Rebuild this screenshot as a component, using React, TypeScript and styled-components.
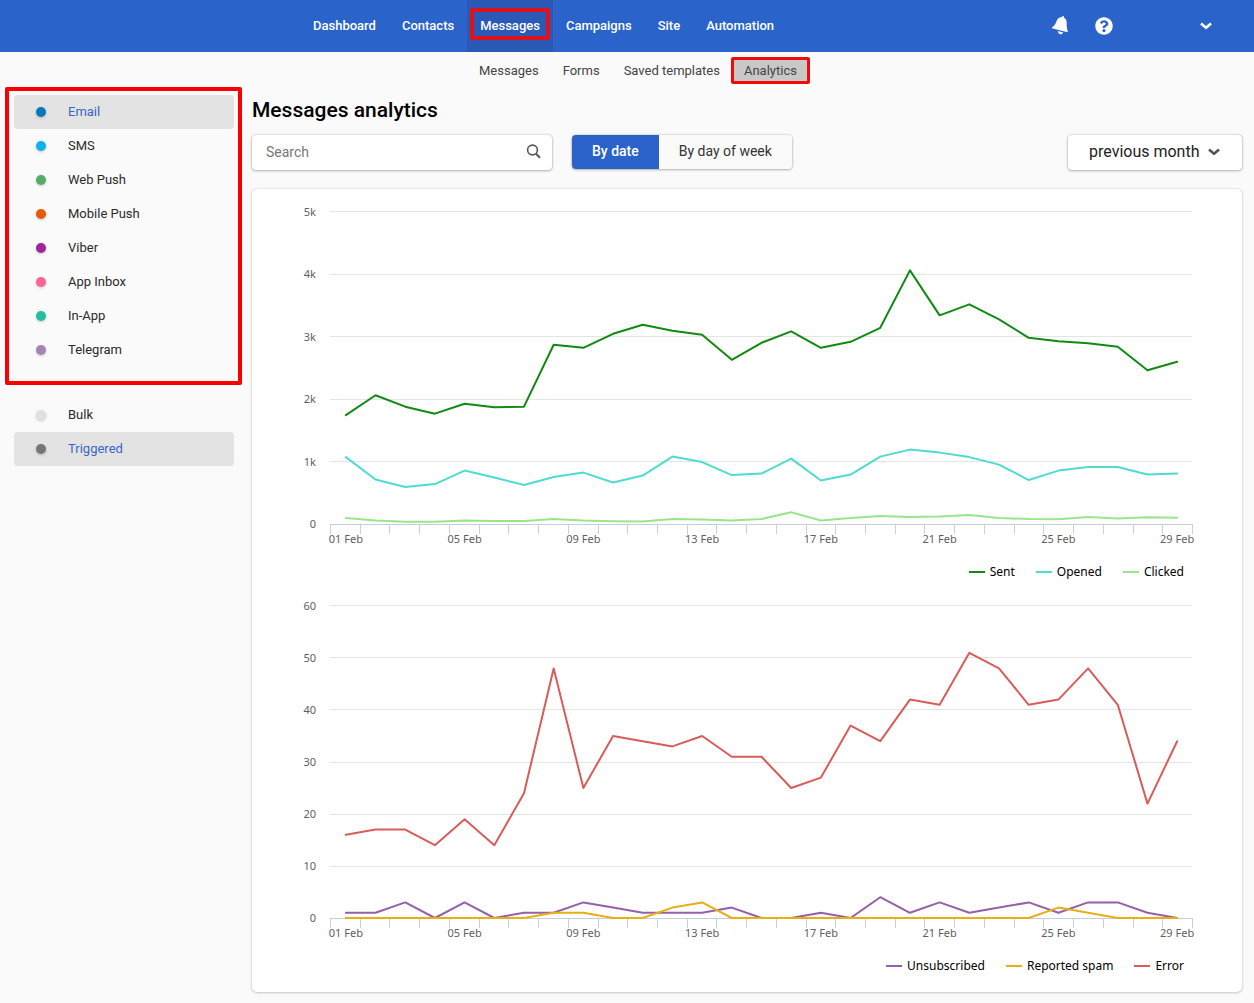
import React, { useLayoutEffect, useRef, useState } from 'react';
import styled, { createGlobalStyle, css } from 'styled-components';
import { FaQuestionCircle } from 'react-icons/fa';

const GlobalStyle = createGlobalStyle`
  *, *::before, *::after { box-sizing: border-box; }
  body {
    margin: 0;
    background: #fafafa;
    font-family: Roboto, "Liberation Sans", sans-serif;
    color: #222;
  }
  button, input, select { font: inherit; color: inherit; }
`;

/* Red frame laid over the parts of the screen that the guide points out. */
const callout = (width: number, colour: string, inset: string) => css`
  position: relative;
  &::after {
    content: '';
    position: absolute;
    inset: ${inset};
    border: ${width}px solid ${colour};
    border-radius: 2px;
    pointer-events: none;
  }
`;

const Header = styled.header`
  display: flex;
  height: 52px;
  padding-left: 300px;
  background: #2a64cb;
  color: #fff;
`;

const MainNav = styled.nav`
  display: flex;
  flex: 1;
`;

const NavLink = styled.a<{ $active?: boolean }>`
  display: flex;
  align-items: center;
  padding: 0 13px 2px;
  font-size: 13px;
  font-weight: 500;
  color: #fff;
  text-decoration: none;
  ${(p) => p.$active && css`
    background: #2a5ab6;
    ${callout(4, '#e0101c', '8px 3px 12px 3px')}
  `}
`;

const HeaderActions = styled.div`
  display: flex;
  align-items: center;
  padding-right: 42px;
`;

const IconButton = styled.button<{ $gap?: number }>`
  display: flex;
  padding: 0;
  margin-left: ${(p) => p.$gap ?? 0}px;
  border: 0;
  background: none;
  color: inherit;
  cursor: pointer;
`;

const SubNav = styled.nav`
  display: flex;
  align-items: center;
  height: 36px;
  padding-left: 467px;
`;

const SubLink = styled.a<{ $active?: boolean }>`
  padding: 2px 12px 0;
  font-size: 13px;
  line-height: 22px;
  color: #444;
  text-decoration: none;
  white-space: nowrap;
  ${(p) => p.$active && css`
    border-radius: 4px;
    background: #c8c8c8;
    ${callout(3, '#f00a0a', '-1px -1px -2px')}
  `}
`;

const Body = styled.div`
  display: flex;
  align-items: flex-start;
  padding: 0 12px 11px 5px;
`;

const Sidebar = styled.aside`
  flex: none;
  width: 237px;
  margin-right: 10px;
`;

const Group = styled.div<{ $marked?: boolean }>`
  padding: ${(p) => (p.$marked ? '7px 8px 17px 9px' : '14px 8px 0 9px')};
  ${(p) => p.$marked && callout(4, '#fa0000', '-1px 0')}
`;

const Filter = styled.button<{ $active?: boolean }>`
  display: flex;
  align-items: center;
  gap: 22px;
  width: 100%;
  height: 34px;
  padding: 0 22px;
  border: 0;
  border-radius: 4px;
  background: ${(p) => (p.$active ? '#e3e3e3' : 'transparent')};
  color: ${(p) => (p.$active ? '#3a66c4' : '#2b2b2b')};
  font-size: 13px;
  cursor: pointer;
`;

const FilterName = styled.span`
  padding-bottom: 2px;
`;

const Dot = styled.span<{ $colour: string }>`
  width: 10px;
  height: 10px;
  border-radius: 50%;
  background: ${(p) => p.$colour};
  box-shadow: 0 1px 3px rgba(0, 0, 0, 0.2);
`;

const Main = styled.main`
  flex: 1;
  min-width: 0;
`;

const Title = styled.h1`
  margin: 7px 0 9px;
  font-size: 21px;
  font-weight: 500;
  line-height: 31px;
  color: #000;
`;

const Toolbar = styled.div`
  display: flex;
  align-items: flex-start;
  height: 35px;
  margin-bottom: 19px;
`;

const raised = css`
  border-radius: 4px;
  box-shadow: 0 0 2px rgba(0, 0, 0, 0.3), 0 1px 3px rgba(0, 0, 0, 0.22);
`;

const SearchBox = styled.div`
  ${raised}
  display: flex;
  align-items: center;
  width: 300px;
  height: 35px;
  padding: 0 11px 2px 14px;
  background: #fff;
`;

const SearchInput = styled.input`
  flex: 1;
  min-width: 0;
  padding: 0;
  border: 0;
  outline: 0;
  background: none;
  font-size: 14px;
  &::placeholder { color: #777; opacity: 1; }
`;

const Toggle = styled.div`
  ${raised}
  display: flex;
  height: 34px;
  margin-left: 20px;
  overflow: hidden;
`;

const ToggleButton = styled.button<{ $active?: boolean }>`
  padding: 0 20px 2px;
  border: 0;
  background: ${(p) => (p.$active ? '#2a62c9' : '#fafafa')};
  color: ${(p) => (p.$active ? '#fff' : '#333')};
  font-size: 14px;
  font-weight: ${(p) => (p.$active ? 500 : 400)};
  cursor: pointer;
`;

const Period = styled.div`
  ${raised}
  display: grid;
  align-items: center;
  width: 174px;
  height: 35px;
  margin-left: auto;
  padding-bottom: 2px;
  background: #fff;
  & > * { grid-area: 1 / 1; }
  & > svg {
    justify-self: end;
    margin-right: 22px;
    color: #555;
    pointer-events: none;
  }
`;

const PeriodSelect = styled.select`
  appearance: none;
  width: 100%;
  height: 100%;
  padding: 0 40px 0 21px;
  border: 0;
  border-radius: 4px;
  background: none;
  font-size: 16px;
`;

const Card = styled.section`
  padding: 10px 50px 5px 48px;
  border-radius: 5px;
  background: #fff;
  box-shadow: 0 0 2px rgba(0, 0, 0, 0.2), 0 1px 3px rgba(0, 0, 0, 0.16);
`;

const Figure = styled.figure`
  margin: 0;
  height: 394px;
  font-family: "Noto Sans", "Open Sans", sans-serif;
`;

const Plot = styled.svg`
  display: block;
  width: 100%;
  height: 360px;
  overflow: visible;
`;

const AxisText = styled.text`
  font-size: 11px;
  fill: #606060;
`;

const Legend = styled.figcaption`
  display: flex;
  justify-content: flex-end;
  gap: 21px;
  padding-right: 8px;
  font-size: 12px;
  line-height: 26px;
  color: #000;
`;

const LegendItem = styled.span<{ $colour: string }>`
  display: flex;
  align-items: center;
  gap: 5px;
  &::before {
    content: '';
    width: 16px;
    height: 2px;
    background: ${(p) => p.$colour};
  }
`;

type Series = { name: string; colour: string; values: number[] };

type ChartProps = {
  id: string;
  label: string;
  ticks: { value: number; text: string }[];
  series: Series[];
  drawOrder: number[];
};

const DAYS = 29;
const LEFT = 30;
const TOP = 12;
const PLOT_HEIGHT = 313;

function Chart({ id, label, ticks, series, drawOrder }: ChartProps) {
  const ref = useRef<HTMLElement>(null);
  const [width, setWidth] = useState(892);

  useLayoutEffect(() => {
    const el = ref.current;
    if (!el) return;
    const measure = () => setWidth(el.clientWidth);
    measure();
    const observer = new ResizeObserver(measure);
    observer.observe(el);
    return () => observer.disconnect();
  }, []);

  const plotWidth = width - LEFT;
  const step = plotWidth / DAYS;
  const max = ticks[ticks.length - 1].value;
  const base = TOP + PLOT_HEIGHT;
  const x = (day: number) => LEFT + 1 + ((day + 0.5) * (plotWidth - 1)) / DAYS;
  const y = (v: number) => base - (v / max) * (PLOT_HEIGHT - 1);
  const crisp = (v: number) => Math.round(v) + 0.5;
  const gridY = (v: number) => crisp(base - (v / max) * PLOT_HEIGHT);

  return (
    <Figure ref={ref}>
      <Plot role="img" aria-label={label}>
        <clipPath id={id}>
          <rect x={LEFT} y={0} width={plotWidth} height={base + 1} />
        </clipPath>
        {ticks.map((t) => (
          <g key={t.value}>
            {t.value > 0 && (
              <line x1={LEFT} x2={width} y1={gridY(t.value)} y2={gridY(t.value)} stroke="#e4e4e4" />
            )}
            <AxisText x={16} y={Math.round(y(t.value)) + 4} textAnchor="end">{t.text}</AxisText>
          </g>
        ))}
        <line x1={LEFT} x2={width} y1={base + 0.5} y2={base + 0.5} stroke="#c4cedc" />
        {Array.from({ length: DAYS + 1 }, (_, i) => {
          const tick = crisp(LEFT + i * step);
          return <line key={i} x1={tick} x2={tick} y1={base} y2={base + 10} stroke="#c8d0dc" />;
        })}
        {[1, 5, 9, 13, 17, 21, 25, 29].map((day) => (
          <AxisText key={day} x={x(day - 1)} y={base + 19} textAnchor="middle">
            {String(day).padStart(2, '0')} Feb
          </AxisText>
        ))}
        <g clipPath={`url(#${id})`}>
          {drawOrder.map((n) => (
            <polyline
              key={series[n].name}
              points={series[n].values.map((v, i) => `${x(i)},${y(v)}`).join(' ')}
              fill="none"
              stroke={series[n].colour}
              strokeWidth={2}
              strokeLinejoin="round"
              strokeLinecap="round"
            />
          ))}
        </g>
      </Plot>
      <Legend>
        {series.map((s) => (
          <LegendItem key={s.name} $colour={s.colour}>{s.name}</LegendItem>
        ))}
      </Legend>
    </Figure>
  );
}

const delivery: Series[] = [
  {
    name: 'Sent',
    colour: '#118a11',
    values: [1744, 2064, 1880, 1768, 1928, 1872, 1880, 2872, 2824, 3048, 3192, 3096, 3032, 2632, 2904, 3088, 2824, 2920, 3144, 4064, 3344, 3520, 3280, 2984, 2928, 2896, 2840, 2464, 2600],
  },
  {
    name: 'Opened',
    colour: '#4fdcd0',
    values: [1072, 712, 592, 640, 856, 744, 624, 752, 824, 664, 776, 1080, 992, 784, 808, 1048, 696, 792, 1080, 1192, 1144, 1072, 952, 704, 856, 912, 912, 792, 808],
  },
  {
    name: 'Clicked',
    colour: '#98e68c',
    values: [96, 56, 35, 35, 56, 48, 48, 80, 56, 45, 40, 80, 72, 56, 80, 187, 56, 96, 128, 112, 120, 144, 96, 80, 75, 112, 88, 107, 99],
  },
];

const problems: Series[] = [
  {
    name: 'Unsubscribed',
    colour: '#9460ac',
    values: [1, 1, 3, 0, 3, 0, 1, 1, 3, 2, 1, 1, 1, 2, 0, 0, 1, 0, 4, 1, 3, 1, 2, 3, 1, 3, 3, 1, 0],
  },
  {
    name: 'Reported spam',
    colour: '#e8ae14',
    values: [0, 0, 0, 0, 0, 0, 0, 1, 1, 0, 0, 2, 3, 0, 0, 0, 0, 0, 0, 0, 0, 0, 0, 0, 2, 1, 0, 0, 0],
  },
  {
    name: 'Error',
    colour: '#d95c5a',
    values: [16, 17, 17, 14, 19, 14, 24, 48, 25, 35, 34, 33, 35, 31, 31, 25, 27, 37, 34, 42, 41, 51, 48, 41, 42, 48, 41, 22, 34],
  },
];

const channels = [
  ['Email', '#0678bc'],
  ['SMS', '#10b0f0'],
  ['Web Push', '#56ab66'],
  ['Mobile Push', '#e85a08'],
  ['Viber', '#9c259c'],
  ['App Inbox', '#f86698'],
  ['In-App', '#26bd9e'],
  ['Telegram', '#a386b0'],
];

const kinds = [
  ['Bulk', '#e0e0e0'],
  ['Triggered', '#757575'],
];

function Chevron() {
  return (
    <svg width="12" height="8" viewBox="0 0 12 8" fill="none" stroke="currentColor" strokeWidth="2.6" aria-hidden="true">
      <path d="M1 1.5 L6 5.8 L11 1.5" strokeLinejoin="round" />
    </svg>
  );
}

function Bell() {
  return (
    <svg width="18" height="20" viewBox="0 1 18 20" fill="currentColor" aria-hidden="true">
      <path d="M11.4 1.2c.3-.9 1.6-.6 1.5.4l-.1.9c2.2 1.1 3 3.3 2.9 5.7-.1 3 .1 5.3 1 7.9.2.7-.3 1.2-1 1L1.6 13.4c-.8-.2-.8-1-.2-1.4 2-1.3 3-3 4-5.6C6.4 3.8 8.3 2.2 11.2 2.1z" />
      <path d="M6.8 16.1l5.4 1.4c-.7 1.5-1.9 2-3.2 1.7-1.3-.4-2.1-1.5-2.2-3.1z" />
    </svg>
  );
}

function Magnifier() {
  return (
    <svg width="15" height="15" viewBox="0 0 15 15" fill="none" stroke="#555" strokeWidth="1.6" aria-hidden="true">
      <circle cx="6.5" cy="6" r="4.9" />
      <path d="M10 9.8 L14 13.8" strokeWidth="2" />
    </svg>
  );
}

export default function App() {
  const [channel, setChannel] = useState('Email');
  const [kind, setKind] = useState('Triggered');
  const [byDate, setByDate] = useState(true);

  return (
    <>
      <GlobalStyle />
      <Header>
        <MainNav aria-label="Main">
          {['Dashboard', 'Contacts', 'Messages', 'Campaigns', 'Site', 'Automation'].map((n) => (
            <NavLink key={n} href="#" $active={n === 'Messages'}>{n}</NavLink>
          ))}
        </MainNav>
        <HeaderActions>
          <IconButton aria-label="Notifications"><Bell /></IconButton>
          <IconButton aria-label="Help" $gap={26}><FaQuestionCircle size={18} /></IconButton>
          <IconButton aria-label="Account" $gap={87}><Chevron /></IconButton>
        </HeaderActions>
      </Header>
      <SubNav aria-label="Messages">
        {['Messages', 'Forms', 'Saved templates', 'Analytics'].map((n) => (
          <SubLink key={n} href="#" $active={n === 'Analytics'}>{n}</SubLink>
        ))}
      </SubNav>
      <Body>
        <Sidebar>
          <Group $marked>
            {channels.map(([name, colour]) => (
              <Filter key={name} $active={name === channel} aria-pressed={name === channel} onClick={() => setChannel(name)}>
                <Dot $colour={colour} />
                <FilterName>{name}</FilterName>
              </Filter>
            ))}
          </Group>
          <Group>
            {kinds.map(([name, colour]) => (
              <Filter key={name} $active={name === kind} aria-pressed={name === kind} onClick={() => setKind(name)}>
                <Dot $colour={colour} />
                <FilterName>{name}</FilterName>
              </Filter>
            ))}
          </Group>
        </Sidebar>
        <Main>
          <Title>Messages analytics</Title>
          <Toolbar>
            <SearchBox>
              <SearchInput type="text" placeholder="Search" aria-label="Search" />
              <IconButton aria-label="Find"><Magnifier /></IconButton>
            </SearchBox>
            <Toggle>
              <ToggleButton $active={byDate} onClick={() => setByDate(true)}>By date</ToggleButton>
              <ToggleButton $active={!byDate} onClick={() => setByDate(false)}>By day of week</ToggleButton>
            </Toggle>
            <Period>
              <PeriodSelect aria-label="Period" defaultValue="previous month">
                <option>previous month</option>
              </PeriodSelect>
              <Chevron />
            </Period>
          </Toolbar>
          <Card>
            <Chart
              id="plot-delivery"
              label="Sent, opened and clicked messages by date"
              ticks={[0, 1, 2, 3, 4, 5].map((k) => ({ value: k * 1000, text: k ? `${k}k` : '0' }))}
              series={delivery}
              drawOrder={[0, 1, 2]}
            />
            <Chart
              id="plot-problems"
              label="Unsubscribed, reported spam and errors by date"
              ticks={[0, 10, 20, 30, 40, 50, 60].map((v) => ({ value: v, text: String(v) }))}
              series={problems}
              drawOrder={[2, 0, 1]}
            />
          </Card>
        </Main>
      </Body>
    </>
  );
}
